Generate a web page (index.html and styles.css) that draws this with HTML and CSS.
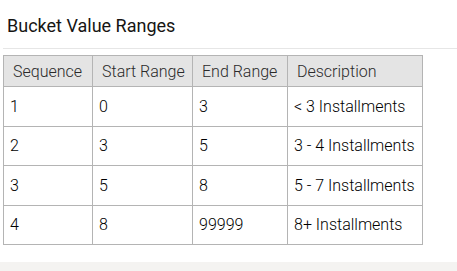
FILE: index.html
```html
<!DOCTYPE html>
<html>
<head>
<meta charset="utf-8">
<link rel="stylesheet" href="styles.css">
</head>
<body>
<div class="panel">
  <h2 class="title">Bucket Value Ranges</h2>
  <div class="content">
    <table class="grid">
      <colgroup>
        <col class="c1"><col class="c2"><col class="c3"><col class="c4">
      </colgroup>
      <thead>
        <tr><th>Sequence</th><th>Start Range</th><th>End Range</th><th>Description</th></tr>
      </thead>
      <tbody>
        <tr><td>1</td><td>0</td><td>3</td><td>&lt; 3 Installments</td></tr>
        <tr><td>2</td><td>3</td><td>5</td><td>3 - 4 Installments</td></tr>
        <tr><td>3</td><td>5</td><td>8</td><td>5 - 7 Installments</td></tr>
        <tr><td>4</td><td>8</td><td>99999</td><td>8+ Installments</td></tr>
      </tbody>
    </table>
  </div>
</div>
<div class="footer"></div>
</body>
</html>
```

FILE: styles.css
```css
html, body {
  margin: 0;
  padding: 0;
  background: #ffffff;
}
body {
  width: 457px;
  height: 271px;
  overflow: hidden;
  font-family: "Roboto", "Open Sans", sans-serif;
  color: #161513;
}
.panel {
  height: 262px;
}
.title {
  margin: 0 0 0 3px;
  padding: 15px 0 0 4px;
  height: 49px;
  box-sizing: border-box;
  border-bottom: 1px solid #e6e6e6;
  font-size: 18px;
  font-weight: 400;
  line-height: 22px;
}
.content {
  padding: 6px 0 0 3px;
}
.grid {
  border-collapse: collapse;
  table-layout: fixed;
  width: 419px;
  font-size: 16px;
  font-weight: 300;
}
.c1 { width: 89px; }
.c2 { width: 100px; }
.c3 { width: 95px; }
.c4 { width: 135px; }
.grid th, .grid td {
  border: 1px solid #b4b4b4;
  text-align: left;
  white-space: nowrap;
  overflow: hidden;
}
.grid th {
  background: #e4e4e4;
  font-weight: 300;
  color: #2a2a2a;
  height: 30px;
  padding: 0 0 0 9px;
}
.grid td {
  height: 38.5px;
  padding: 0 0 0 6px;
  color: #000000;
}
.footer {
  height: 9px;
  background: #f4f3f1;
}
```
